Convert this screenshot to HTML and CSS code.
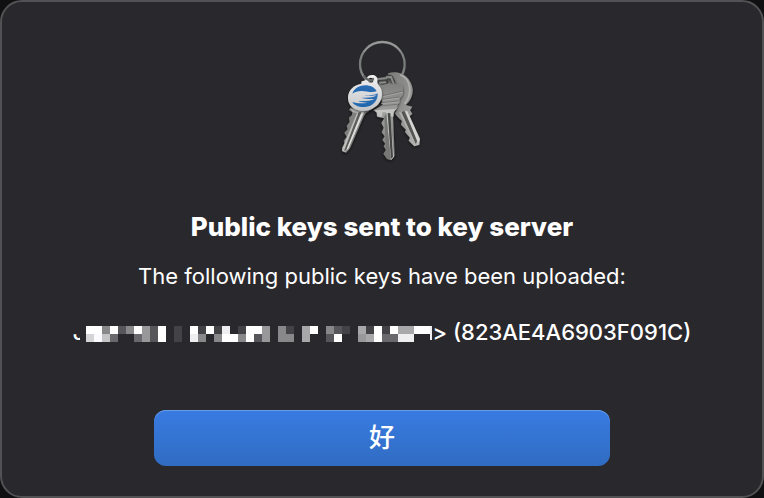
FILE: index.html
```html
<!DOCTYPE html>
<html lang="en">
<head>
    <meta charset="UTF-8">
    <meta name="viewport" content="width=device-width, initial-scale=1.0">
    <title>Public keys sent to key server</title>
    <link rel="stylesheet" href="styles.css">
</head>
<body>
<main class="dialog">

    <!-- Keyring icon -->
    <svg class="keyring" viewBox="0 0 360 420" aria-hidden="true">
        <defs>
            <linearGradient id="ring" x1="0" y1="0" x2="0" y2="1">
                <stop offset="0" stop-color="#8d908f"/>
                <stop offset="0.5" stop-color="#747877"/>
                <stop offset="1" stop-color="#979998"/>
            </linearGradient>
            <linearGradient id="steel" x1="0" y1="0" x2="1" y2="1">
                <stop offset="0" stop-color="#7c7d7b"/>
                <stop offset="0.6" stop-color="#979896"/>
                <stop offset="1" stop-color="#b9bab8"/>
            </linearGradient>
            <linearGradient id="head" x1="0" y1="0" x2="0" y2="1">
                <stop offset="0" stop-color="#7f807e"/>
                <stop offset="0.4" stop-color="#a0a19f"/>
                <stop offset="1" stop-color="#737472"/>
            </linearGradient>
            <linearGradient id="tag" x1="0" y1="0" x2="0" y2="1">
                <stop offset="0" stop-color="#f2f2f3"/>
                <stop offset="1" stop-color="#c3c4c6"/>
            </linearGradient>
            <linearGradient id="blue" x1="0" y1="0" x2="0" y2="1">
                <stop offset="0" stop-color="#2f6eb5"/>
                <stop offset="1" stop-color="#1f67ad"/>
            </linearGradient>
            <filter id="shadow" x="-20%" y="-20%" width="140%" height="140%">
                <feDropShadow dx="0" dy="4" stdDeviation="5" flood-color="#000" flood-opacity="0.6"/>
            </filter>
        </defs>

        <!-- Ring -->
        <circle cx="181" cy="103" r="67" fill="none" stroke="url(#ring)" stroke-width="7"/>
        <path d="M126 66a67 67 0 0 1 110-3" fill="none" stroke="#a8aaa9" stroke-width="2"/>

        <!-- Right key -->
        <g filter="url(#shadow)">
            <path d="M198 130C234 118 268 141 272 178C273 198 264 215 251 225L271 230L264 241L271 251L263 259L294 326L292 344L277 349L260 332L264 323L249 306L252 299L237 284L240 273L228 262L218 250L226 236L196 228Z" fill="url(#steel)"/>
            <path d="M235 134C265 146 274 188 248 222" fill="none" stroke="#b0b1af" stroke-width="5"/>
            <path d="M238 247L247 243L287 331L281 342Z" fill="#555653"/>
            <path d="M249 242L256 244L293 328L288 340Z" fill="#d4d5d3"/>
            <path d="M231 246L238 247L281 342L275 340Z" fill="#aeafac"/>
        </g>

        <!-- Middle key -->
        <g filter="url(#shadow)">
            <path d="M168 158L238 164L243 170L243 193L233 206L233 217L226 224L225 236L218 240L213 261L218 377L207 391L195 387L184 371L192 360L185 349L190 341L181 330L188 319L179 307L185 293L178 279L187 265L165 260L164 247L154 241L182 225Z" fill="url(#head)"/>
            <path d="M157 241L224 237L214 247V260L205 259L216 380L207 390L192 247L181 247L180 260L167 259L165 248Z" fill="#c4c5c3"/>
            <path d="M197 249L205 250L213 380L207 386Z" fill="#454644"/>
            <path d="M187 260L193 249L205 381L198 387L186 371L192 360Z" fill="#777876"/>
            <path d="M183 197L243 183M182 208L233 201M177 218L233 213M171 228L226 223" stroke="#656663" stroke-width="2"/>
            <path d="M183 200L242 187M182 211L232 204M177 221L232 216" stroke="#aeafad" stroke-width="2"/>
            <path d="M170 143C166 154 176 162 190 157L196 141M174 149L191 145L199 139L207 141L216 159" fill="none" stroke="#404240" stroke-width="11" stroke-linejoin="round"/>
            <path d="M168 147L192 145M194 142L207 141L214 159M174 158L190 157" fill="none" stroke="#898c8a" stroke-width="6" stroke-linecap="round"/>
        </g>

        <!-- Left key -->
        <g filter="url(#shadow)">
            <path d="M87 232L155 234L132 249L126 257L84 355L72 368L60 363L61 351L70 343L65 332L74 320L67 308L77 298L74 287L83 276L81 263L90 255L91 246L81 240Z" fill="#80817f"/>
            <path d="M84 236L139 238L126 246L121 257L77 358L69 366L61 363L61 355L105 249L93 247Z" fill="#bfc0be"/>
            <path d="M110 247L118 247L73 360L66 363Z" fill="#5a5b59"/>
            <path d="M119 247L126 247L79 356L73 360Z" fill="#dddedc"/>
        </g>

        <!-- Oval tag -->
        <g filter="url(#shadow)">
            <path fill="url(#tag)" fill-rule="evenodd" d="M119 154C125 154 132 151 134 145C138 136 145 134 153 135C163 137 168 144 166 153C165 161 169 164 174 171C183 184 182 207 170 221C155 239 130 246 110 241C88 236 77 220 78 201C79 181 94 165 118 161ZM146 143A8 8 0 1 0 146 159A8 8 0 1 0 146 143Z"/>
            <path d="M91 191C97 174 113 166 130 166C145 166 158 172 164 184C148 189 135 184 119 183C107 183 98 186 91 191Z" fill="url(#blue)"/>
            <path d="M167 190C169 211 153 230 129 231C110 232 95 225 91 216C104 221 121 221 137 218C125 217 114 216 109 213C126 213 144 214 158 207C143 208 130 207 119 203C137 204 154 203 164 196C150 198 137 197 126 195C142 196 157 196 167 190Z" fill="url(#blue)"/>
        </g>

        <!-- Ring end in front of the tag -->
        <path d="M126 140L136 148L149 152L153 147" fill="none" stroke="#626665" stroke-width="7" stroke-linecap="round" stroke-linejoin="round"/>
    </svg>

    <h1 class="title">Public keys sent to key server</h1>
    <p class="message">The following public keys have been uploaded:</p>

    <!-- Uploaded key, owner is redacted -->
    <p class="key">
        <span class="initial">J</span>
        <svg class="redacted" viewBox="0 -4 352 20" shape-rendering="crispEdges" aria-hidden="true">
            <g stroke-width="8">
                <path stroke="#fff" d="M6 4h16M30 4h8M54 4h8M78 4h8M110 4h8M126 4h8M166 4h16M230 4h8M294 4h8M310 4h8M334 4h16M78 12h8M142 12h16M166 12h8M254 12h8M294 12h8"/>
                <path stroke="#eeeef0" d="M142 4h8M110 12h8M318 12h16"/>
                <path stroke="#d4d4d6" d="M6 12h8"/>
                <path stroke="#fafaff" d="M14 12h8"/>
                <path stroke="#c4c4c6" d="M22 12h8"/>
                <path stroke="#a8a8aa" d="M222 4h8M222 12h8M278 4h8M318 4h16M286 12h8"/>
                <path stroke="#98989a" d="M62 4h8M62 12h8M182 4h8M182 12h8M278 12h8"/>
                <path stroke="#88888b" d="M22 4h8M46 4h8M118 12h8M134 12h8M158 12h8M198 4h8M198 12h8M206 12h8M246 4h8"/>
                <path stroke="#69696d" d="M30 12h8M54 12h8M302 12h8M310 12h8"/>
                <path stroke="#57575b" d="M38 4h8M70 4h8M70 12h8M174 12h8M246 12h8M254 4h8"/>
                <path stroke="#434347" d="M94 4h8M94 12h8M118 4h8M134 4h8M158 4h8M206 4h8M262 4h8M286 4h8M302 4h8"/>
            </g>
            <path fill="#eee" d="M350 0h2v14h-2z"/>
        </svg>
        <span>&gt; (823AE4A6903F091C)</span>
    </p>

    <button class="ok" type="button">好</button>
</main>
</body>
</html>
```
FILE: styles.css
```css
* {
    box-sizing: border-box;
}
body {
    margin: 0;
    background-color: #101012;
    color: #fff;
    font-family: Inter, "Noto Sans CJK SC", sans-serif;
}
.dialog {
    display: flex;
    flex-direction: column;
    align-items: center;
    min-height: 100vh;
    padding: 28px 24px 30px;
    background-color: #29282c;
    border: 2px solid #525255;
    border-radius: 22px;
}
.keyring {
    width: 120px;
    height: 140px;
}
.title {
    margin: 41px 0 0;
    font-size: 26px;
    line-height: 32px;
    font-weight: 800;
}
.message {
    margin: 19px 0 0;
    font-size: 22px;
    line-height: 28px;
    font-weight: 400;
}
.key {
    display: flex;
    align-items: center;
    margin: 28px 0 0;
    font-size: 22px;
    line-height: 28px;
    font-weight: 500;
}
/* the redaction covers most of the first letter */
.redacted {
    width: 352px;
    height: 20px;
    margin-left: -5px;
    background-color: #29282c;
}
.ok {
    width: 64%;
    height: 56px;
    margin-top: auto;
    padding: 0 0 6px;
    border: none;
    border-radius: 12px;
    background: linear-gradient(#387be2, #306cc2);
    box-shadow: inset 0 1px #699be8;
    color: #fff;
    font-family: "Noto Sans CJK SC", sans-serif;
    font-size: 26px;
    font-weight: 500;
}
```
